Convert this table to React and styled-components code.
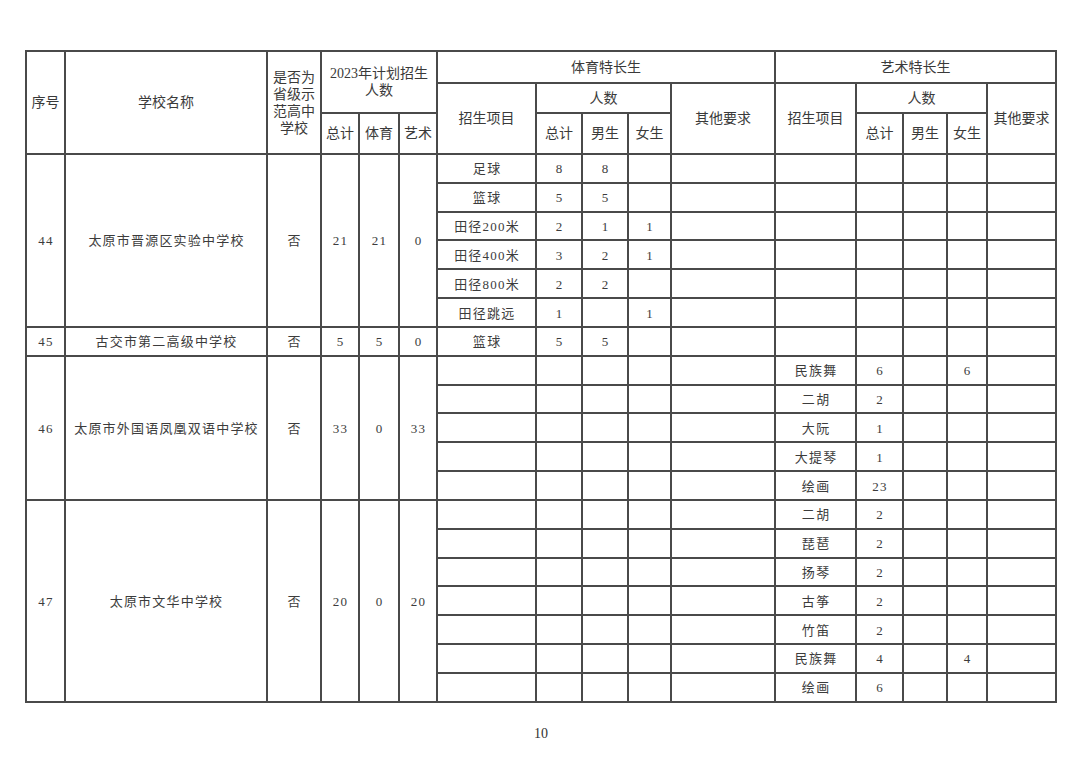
import React from 'react';
import styled, { createGlobalStyle } from 'styled-components';

const Global = createGlobalStyle`
  html, body { margin: 0; padding: 0; background: #ffffff; }
  body {
    font-family: "Liberation Serif", "Noto Sans CJK SC", serif;
    color: #333;
  }
`;

const Page = styled.div`
  width: 1080px;
  height: 764px;
  box-sizing: border-box;
  padding: 50px 23px 0 25px;
  display: flex;
  flex-direction: column;
  align-items: stretch;
  background: #fff;
`;

const Sheet = styled.table`
  width: 1032px;
  border-collapse: collapse;
  table-layout: fixed;
  border: 2px solid #4a4a4a;
`;

const HeadRow = styled.tr`
  height: ${(p) => p.$h}px;
`;

const BodyRow = styled.tr`
  height: 28.84px;
`;

const Th = styled.th`
  border: 2px solid #4a4a4a;
  padding: 0;
  font-weight: 400;
  font-size: 14px;
  line-height: 17px;
  color: #3a3a3a;
  text-align: center;
  vertical-align: middle;
`;

const Td = styled.td`
  border: 2px solid #4a4a4a;
  padding: 2px 0 0 ${(p) => (p.$wide ? 1.5 : 1)}px;
  font-size: 13px;
  line-height: 16px;
  letter-spacing: ${(p) => (p.$wide ? 1.6 : 1.2)}px;
  color: #3c3c3c;
  text-align: center;
  vertical-align: middle;
  white-space: nowrap;
`;

const PageNumber = styled.div`
  margin-top: 23px;
  text-align: center;
  font-size: 14px;
  line-height: 16px;
  color: #333;
`;

const widths = [39, 202, 54, 38, 40, 38, 99, 46, 46, 43, 104, 81, 47, 44, 40, 69];

const E = ['', '', '', ''];

const schools = [
  {
    no: '44', name: '太原市晋源区实验中学校', model: '否', total: '21', sport: '21', art: '0',
    rows: [
      { s: ['足球', '8', '8', ''], a: E },
      { s: ['篮球', '5', '5', ''], a: E },
      { s: ['田径200米', '2', '1', '1'], a: E },
      { s: ['田径400米', '3', '2', '1'], a: E },
      { s: ['田径800米', '2', '2', ''], a: E },
      { s: ['田径跳远', '1', '', '1'], a: E },
    ],
  },
  {
    no: '45', name: '古交市第二高级中学校', model: '否', total: '5', sport: '5', art: '0',
    rows: [{ s: ['篮球', '5', '5', ''], a: E }],
  },
  {
    no: '46', name: '太原市外国语凤凰双语中学校', model: '否', total: '33', sport: '0', art: '33',
    rows: [
      { s: E, a: ['民族舞', '6', '', '6'] },
      { s: E, a: ['二胡', '2', '', ''] },
      { s: E, a: ['大阮', '1', '', ''] },
      { s: E, a: ['大提琴', '1', '', ''] },
      { s: E, a: ['绘画', '23', '', ''] },
    ],
  },
  {
    no: '47', name: '太原市文华中学校', model: '否', total: '20', sport: '0', art: '20',
    rows: [
      { s: E, a: ['二胡', '2', '', ''] },
      { s: E, a: ['琵琶', '2', '', ''] },
      { s: E, a: ['扬琴', '2', '', ''] },
      { s: E, a: ['古筝', '2', '', ''] },
      { s: E, a: ['竹笛', '2', '', ''] },
      { s: E, a: ['民族舞', '4', '', '4'] },
      { s: E, a: ['绘画', '6', '', ''] },
    ],
  },
];

function Group({ cells }) {
  const [item, total, male, female] = cells;
  return (
    <>
      <Td $wide={item.length <= 2}>{item}</Td>
      <Td>{total}</Td>
      <Td>{male}</Td>
      <Td>{female}</Td>
      <Td />
    </>
  );
}

export default function App() {
  return (
    <Page>
      <Global />
      <Sheet>
        <colgroup>
          {widths.map((w, i) => (
            <col key={i} style={{ width: w }} />
          ))}
        </colgroup>
        <thead>
          <HeadRow $h={32}>
            <Th rowSpan={3}>序号</Th>
            <Th rowSpan={3}>学校名称</Th>
            <Th rowSpan={3}>是否为<br />省级示<br />范高中<br />学校</Th>
            <Th rowSpan={2} colSpan={3}>2023年计划招生<br />人数</Th>
            <Th colSpan={5}>体育特长生</Th>
            <Th colSpan={5}>艺术特长生</Th>
          </HeadRow>
          <HeadRow $h={30}>
            <Th rowSpan={2}>招生项目</Th>
            <Th colSpan={3}>人数</Th>
            <Th rowSpan={2}>其他要求</Th>
            <Th rowSpan={2}>招生项目</Th>
            <Th colSpan={3}>人数</Th>
            <Th rowSpan={2}>其他要求</Th>
          </HeadRow>
          <HeadRow $h={41}>
            <Th>总计</Th>
            <Th>体育</Th>
            <Th>艺术</Th>
            <Th>总计</Th>
            <Th>男生</Th>
            <Th>女生</Th>
            <Th>总计</Th>
            <Th>男生</Th>
            <Th>女生</Th>
          </HeadRow>
        </thead>
        <tbody>
          {schools.map((sc) =>
            sc.rows.map((r, i) => (
              <BodyRow key={`${sc.no}-${i}`}>
                {i === 0 && (
                  <>
                    <Td rowSpan={sc.rows.length}>{sc.no}</Td>
                    <Td rowSpan={sc.rows.length}>{sc.name}</Td>
                    <Td rowSpan={sc.rows.length}>{sc.model}</Td>
                    <Td rowSpan={sc.rows.length}>{sc.total}</Td>
                    <Td rowSpan={sc.rows.length}>{sc.sport}</Td>
                    <Td rowSpan={sc.rows.length}>{sc.art}</Td>
                  </>
                )}
                <Group cells={r.s} />
                <Group cells={r.a} />
              </BodyRow>
            ))
          )}
        </tbody>
      </Sheet>
      <PageNumber>10</PageNumber>
    </Page>
  );
}
